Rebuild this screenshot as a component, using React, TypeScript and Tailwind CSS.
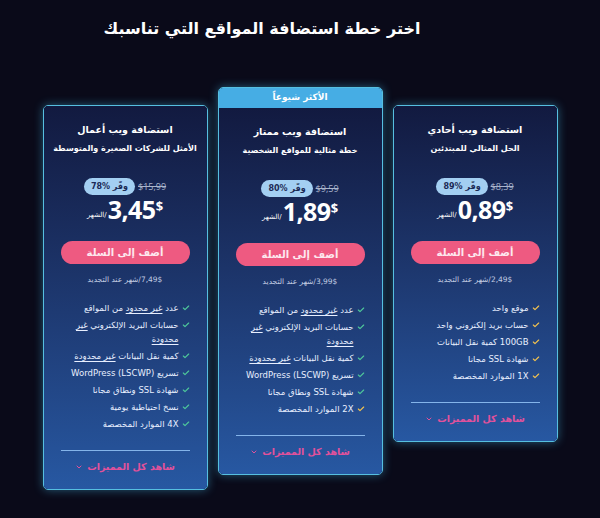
import { Check, ChevronDown } from 'lucide-react';
import type { ReactNode } from 'react';

const arabic = 'font-["DejaVu_Sans","Noto_Sans",sans-serif]';

type Plan = {
  name: string;
  tagline: string;
  oldPrice: string;
  save: string;
  price: string;
  renew: string;
  popular?: boolean;
  features: { text: ReactNode; gold?: boolean }[];
};

const U = ({ children }: { children: ReactNode }) => (
  <span className="underline decoration-1 underline-offset-2">{children}</span>
);

const emailUnlimited = (
  <>
    حسابات البريد الإلكتروني <U>غير</U>
    <br />
    <U>محدودة</U>
  </>
);

const plans: Plan[] = [
  {
    name: 'استضافة ويب أحادي',
    tagline: 'الحل المثالي للمبتدئين',
    oldPrice: '$8,39',
    save: 'وفّر %89',
    price: '0,89',
    renew: '2,49$/شهر عند التجديد',
    features: [
      { text: 'موقع واحد', gold: true },
      { text: 'حساب بريد إلكتروني واحد', gold: true },
      { text: '100GB كمية نقل البيانات', gold: true },
      { text: 'شهادة SSL مجانا', gold: true },
      { text: '1X الموارد المخصصة', gold: true },
    ],
  },
  {
    name: 'استضافة ويب ممتاز',
    tagline: 'خطة مثالية للمواقع الشخصية',
    oldPrice: '$9,59',
    save: 'وفّر %80',
    price: '1,89',
    renew: '3,99$/شهر عند التجديد',
    popular: true,
    features: [
      { text: <>عدد <U>غير محدود</U> من المواقع</> },
      { text: emailUnlimited },
      { text: <>كمية نقل البيانات <U>غير محدودة</U></> },
      { text: 'تسريع WordPress (LSCWP)' },
      { text: 'شهادة SSL ونطاق مجانا' },
      { text: '2X الموارد المخصصة', gold: true },
    ],
  },
  {
    name: 'استضافة ويب أعمال',
    tagline: 'الأمثل للشركات الصغيرة والمتوسطة',
    oldPrice: '$15,99',
    save: 'وفّر %78',
    price: '3,45',
    renew: '7,49$/شهر عند التجديد',
    features: [
      { text: <>عدد <U>غير محدود</U> من المواقع</> },
      { text: emailUnlimited },
      { text: <>كمية نقل البيانات <U>غير محدودة</U></> },
      { text: 'تسريع WordPress (LSCWP)' },
      { text: 'شهادة SSL ونطاق مجانا' },
      { text: 'نسخ احتياطية يومية' },
      { text: '4X الموارد المخصصة' },
    ],
  },
];

function PlanCard({ plan }: { plan: Plan }) {
  return (
    <div
      className={`w-[165px] flex flex-col rounded-[5px] border border-[#56bfe0] shadow-[0_0_10px_rgba(70,190,235,0.45)] overflow-hidden ${
        plan.popular ? '' : 'mt-[18px]'
      }`}
    >
      {plan.popular && (
        <div className="h-[20px] bg-[#46ade4] flex items-center justify-center text-[9px] font-bold text-white">
          الأكثر شيوعاً
        </div>
      )}
      <div className="flex flex-col bg-linear-to-b from-[#121a40] to-[#2758a2] px-[17px] pt-[17px] pb-[15px]">
        <div className="text-center text-[9.5px] leading-[14px] font-bold text-white">{plan.name}</div>
        <div className="mt-[5px] text-center text-[8px] leading-[14px] font-bold text-white whitespace-nowrap -mx-[10px]">
          {plan.tagline}
        </div>

        <div className="mt-[22px] flex items-center justify-center gap-[3px]">
          <span className="text-[9px] text-[#aab5cc] line-through font-['Open_Sans',sans-serif]">{plan.oldPrice}</span>
          <span className="h-[17px] px-[7px] rounded-full bg-[#a3cff2] text-[#1b2a55] text-[8px] font-bold flex items-center">
            {plan.save}
          </span>
        </div>

        <div dir="ltr" className="mt-[2px] h-[24px] flex items-end justify-center text-white">
          <span className="text-[7px] leading-[10px] mb-[1px] mr-[1px]">الشهر/</span>
          <span className="text-[25px] leading-[24px] font-bold font-['Open_Sans',sans-serif] tracking-[-0.5px]">
            {plan.price}
          </span>
          <span className="self-start text-[13px] leading-[14px] font-bold mt-[2px] font-['Open_Sans',sans-serif]">$</span>
        </div>

        <button className="mt-[20px] h-[23px] rounded-full bg-[#ee5a81] text-[#fde8ef] text-[10px] font-bold">
          أضف إلى السلة
        </button>

        <div className="mt-[10px] text-center text-[7.5px] leading-[12px] text-[#c2cde2]">{plan.renew}</div>

        <ul className="mt-[15px] flex flex-col gap-[3px]">
          {plan.features.map((f, i) => (
            <li key={i} className="flex items-start gap-[3px] text-[8.5px] leading-[14px] text-[#e8efff]">
              <Check
                size={8}
                strokeWidth={3.5}
                className={`mt-[3px] shrink-0 ${f.gold ? 'text-[#f2c24f]' : 'text-[#4ec79a]'}`}
              />
              <span>{f.text}</span>
            </li>
          ))}
        </ul>

        <div className="mt-[19px] h-px bg-[#84b4ea]" />

        <div className="mt-[9px] flex items-center justify-center gap-[4px] text-[9.5px] leading-[14px] font-bold text-[#e2519b]">
          <span>شاهد كل المميزات</span>
          <ChevronDown size={8} strokeWidth={3} />
        </div>
      </div>
    </div>
  );
}

export default function App() {
  return (
    <div dir="rtl" className={`min-h-[518px] w-full bg-[#0a0a19] ${arabic}`}>
      <h1 className="pt-[12px] pr-[76px] text-center text-[16px] leading-[34px] font-bold text-white">
        اختر خطة استضافة المواقع التي تناسبك
      </h1>
      <div className="mt-[41px] flex items-start justify-center gap-[10px]">
        {plans.map((p) => (
          <PlanCard key={p.name} plan={p} />
        ))}
      </div>
    </div>
  );
}
